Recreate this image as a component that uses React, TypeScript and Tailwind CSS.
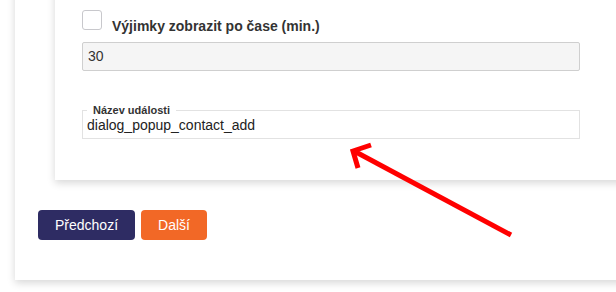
import React from 'react';

export default function App() {
  return (
    <div
      className="relative w-[616px] h-[292px] overflow-hidden bg-white"
      style={{ fontFamily: '"Liberation Sans", Arial, sans-serif' }}
    >
      <div className="ml-[15px] -mt-[30px] w-[700px] pt-[10px] pl-[23px] pb-[40px] bg-white shadow-[0_3px_8px_rgba(0,0,0,0.16)]">
        <div className="ml-[17px] w-[640px] pt-[30px] pl-[27px] pb-[41px] bg-white shadow-[0_3px_8px_rgba(0,0,0,0.16)]">
          <label className="flex items-start gap-[10px]">
            <span className="block w-[20px] h-[20px] rounded-[3px] border border-[#c8c8cc] bg-white" />
            <span className="mt-[6px] text-[14px] leading-[20px] font-bold text-[#333]">
              Výjimky zobrazit po čase (min.)
            </span>
          </label>
          <div className="mt-[6px] w-[498px] h-[29px] px-[5px] flex items-center rounded-[2px] border border-[#cfcfcf] bg-[#f5f5f5] text-[14px] text-[#333]">
            30
          </div>
          <fieldset className="mt-[33px] w-[498px] border border-[#e2e2e2] px-[4px] pb-[5px]">
            <legend className="px-[6px] text-[11px] leading-[13px] font-bold text-[#333]">Název události</legend>
            <div className="text-[14px] leading-[16px] text-[#222]">dialog_popup_contact_add</div>
          </fieldset>
        </div>
        <div className="mt-[30px] flex gap-[6px]">
          <button className="h-[30px] px-[17px] rounded-[4px] bg-[#2e2c63] text-white text-[14px]">Předchozí</button>
          <button className="h-[30px] px-[17px] rounded-[4px] bg-[#f26826] text-white text-[14px]">Další</button>
        </div>
      </div>
      <svg className="absolute left-0 top-0" width="616" height="292" viewBox="0 0 616 292">
        <g stroke="#ff0000" strokeWidth="5" fill="none">
          <line x1="511" y1="235" x2="354" y2="151" />
          <polyline points="371,145 353,151 358,168" strokeLinejoin="miter" />
        </g>
      </svg>
    </div>
  );
}
